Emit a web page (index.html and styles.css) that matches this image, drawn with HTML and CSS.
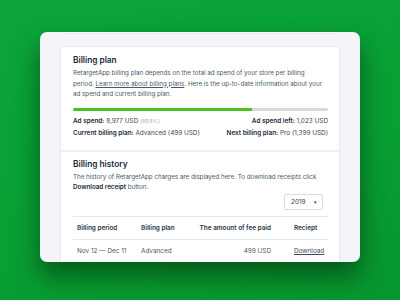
FILE: index.html
```html
<!DOCTYPE html>
<html lang="en">
<head>
    <meta charset="UTF-8">
    <title>Billing</title>
    <link rel="stylesheet" href="styles.css">
</head>
<body>
    <div class="window">
        <div class="card card-stub"></div>

        <div class="card">
            <section class="section plan">
                <h2>Billing plan</h2>
                <p class="text">RetargetApp billing plan depends on the total ad spend of your store per billing<br>period. <a href="#">Learn more about billing plans</a>. Here is the up-to-date information about your ad&nbsp;spend and current billing plan.</p>

                <div class="progress"><div class="progress-fill" style="width: 70%"></div></div>

                <div class="stats">
                    <div><b>Ad spend:</b> 8,977 USD <span class="muted">(89.8%)</span></div>
                    <div><b>Ad spend left:</b> 1,023 USD</div>
                    <div><b>Current billing plan:</b> Advanced (499 USD)</div>
                    <div><b>Next billing plan:</b> Pro (1,399 USD)</div>
                </div>
            </section>

            <section class="section history">
                <h2>Billing history</h2>
                <p class="text">The history of RetargetApp charges are displayed here. To download receipts click <b>Download receipt</b> button.</p>

                <div class="filter">
                    <div class="select">2019 <span class="caret">&#9662;</span></div>
                </div>

                <div class="table">
                    <div class="row head">
                        <div>Billing period</div>
                        <div>Billing plan</div>
                        <div class="num">The amount of fee paid</div>
                        <div class="receipt">Reciept</div>
                    </div>
                    <div class="row">
                        <div>Nov 12 — Dec 11</div>
                        <div>Advanced</div>
                        <div class="num">499 USD</div>
                        <div class="receipt"><a href="#">Download</a></div>
                    </div>
                </div>
            </section>
        </div>
    </div>
</body>
</html>
```

FILE: styles.css
```css
body {
    margin: 0;
    width: 400px;
    height: 300px;
    overflow: hidden;
    font-family: Inter, "Noto Sans", sans-serif;
    background: linear-gradient(160deg, #0ba53b 0%, #08a033 55%, #07962f 100%);
    color: #4b5a6b;
}
.window {
    margin: 32px 40px 0;
    height: 230px;
    padding: 0 20px;
    overflow: hidden;
    background-color: #f4f5f8;
    border-radius: 7px;
    box-shadow: 0 14px 26px rgba(0, 45, 12, 0.6);
}
.card {
    background-color: #fff;
    border: 1px solid #e7e9ee;
    border-top: none;
}
.card-stub {
    height: 1px;
    margin-bottom: 12px;
}
.card + .card {
    border-top: 1px solid #e7e9ee;
}
.section {
    padding: 6px 11px 11px 12px;
}
.section + .section {
    border-top: 2px solid #eef0f3;
    padding-top: 5px;
}
h2 {
    margin: 0;
    font-size: 8.3px;
    line-height: 14px;
    font-weight: 600;
    color: #1c2b3a;
}
.text {
    margin: 1px -4px 0 0;
    font-size: 6.3px;
    line-height: 10.5px;
    letter-spacing: -0.03px;
}
.text a {
    color: inherit;
}
.text b {
    color: #1c2b3a;
    font-weight: 600;
}
.progress {
    margin-top: 8px;
    height: 3px;
    border-radius: 2px;
    background-color: #d5d9df;
    overflow: hidden;
}
.progress-fill {
    height: 100%;
    background-color: #4cc31a;
}
.stats {
    margin-top: 4px;
    display: grid;
    grid-template-columns: 1fr auto;
    font-size: 6.4px;
    line-height: 12px;
    color: #3c4858;
}
.stats div:nth-child(even) {
    text-align: right;
}
.stats b {
    color: #1c2b3a;
    font-weight: 600;
}
.muted {
    color: #a9b2bd;
    font-size: 5.2px;
}
.history .text {
    margin-top: 1px;
}
.filter {
    display: flex;
    justify-content: flex-end;
    padding-right: 5px;
    margin-top: 1px;
}
.select {
    width: 39px;
    height: 16px;
    box-sizing: border-box;
    padding: 0 5px 0 6px;
    display: flex;
    align-items: center;
    justify-content: space-between;
    border: 1px solid #d9dde3;
    border-radius: 2px;
    background: #fff;
    font-size: 6.4px;
    color: #2c3a4a;
}
.caret {
    font-size: 5px;
}
.table {
    margin-top: 6px;
    border-top: 1px solid #e7e9ee;
    font-size: 6.4px;
}
.row {
    display: grid;
    grid-template-columns: 64px 54px 84px 1fr;
    height: 22px;
    align-items: center;
    border-bottom: 1px solid #e7e9ee;
    white-space: nowrap;
}
.row div {
    padding-left: 4px;
}
.row .num {
    text-align: right;
    padding: 0 4px 0 0;
}
.row .receipt {
    padding-left: 19px;
}
.head {
    font-weight: 600;
    color: #2c3a4a;
}
.row a {
    color: #3c4858;
}
```
